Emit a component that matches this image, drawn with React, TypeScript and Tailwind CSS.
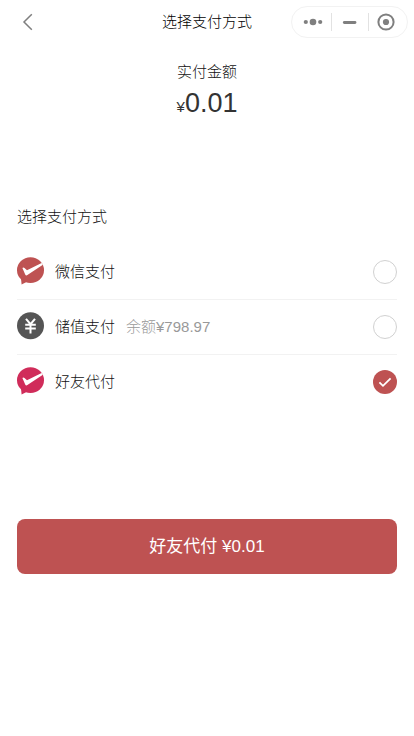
import type { ReactNode } from 'react'

function ChatCheckIcon({ color }: { color: string }) {
  return (
    <svg className="mb-0.5" width="27" height="28" viewBox="0 0 27 28" fill="none">
      <ellipse cx="13.5" cy="13.2" rx="13.5" ry="12.9" fill={color} />
      <path d="M4 21.5L4.6 27.4L9.5 25Z" fill={color} />
      <path d="M5.4 11C6 10.1 6.9 10.4 7.5 11L10 13.2L24.6 5.9L25.9 7.7L10.4 18.1C9.5 18.7 8.6 18.4 8.2 17.5Z" fill="#fff" />
    </svg>
  )
}

function YuanIcon() {
  return (
    <svg className="mb-0.5" width="27" height="28" viewBox="0 0 27 28" fill="none">
      <circle cx="13.5" cy="13.7" r="13.5" fill="#555" />
      <path d="M9 6.8L13.5 12.2L18 6.8M8.2 12.8H18.8M8.2 16.5H18.8M13.5 12V21.5" stroke="#fff" strokeWidth="2" />
    </svg>
  )
}

function Radio({ checked }: { checked: boolean }) {
  if (!checked) {
    return <span className="ml-auto size-6 rounded-full border border-[#d1d1d1]" />
  }
  return (
    <span className="ml-auto flex size-6 items-center justify-center rounded-full bg-[#be5252]">
      <svg width="24" height="24" viewBox="0 0 24 24" fill="none">
        <path d="M6.4 12.3L10 15.8L17.6 8.4" stroke="#fff" strokeWidth="1.8" />
      </svg>
    </span>
  )
}

type Method = {
  name: string
  icon: ReactNode
  note?: string
  checked: boolean
}

const methods: Method[] = [
  { name: '微信支付', icon: <ChatCheckIcon color="#be5252" />, checked: false },
  { name: '储值支付', icon: <YuanIcon />, note: '余额¥798.97', checked: false },
  { name: '好友代付', icon: <ChatCheckIcon color="#d02c5a" />, checked: true },
]

export default function App() {
  return (
    <div className="min-h-screen bg-white font-['Liberation_Sans','Noto_Sans_CJK_SC',sans-serif] text-[15px] font-light text-[#111]">
      <header className="grid h-11 grid-cols-[1fr_auto_1fr] items-center pr-[6px]">
        <svg className="ml-[22px]" width="12" height="18" viewBox="0 0 12 18" fill="none">
          <path d="M9.8 1.2L2 9L9.8 16.8" stroke="#7f7f7f" strokeWidth="1.5" />
        </svg>
        <h1 className="pl-[6px] leading-5 text-black">选择支付方式</h1>
        <div className="flex h-8 w-[117px] items-center justify-self-end rounded-full border border-[#f2f2f2]">
          <svg width="115" height="30" viewBox="0 0 115 30" fill="#7f7f7f">
            <circle cx="13.8" cy="15" r="2.1" />
            <circle cx="21" cy="15" r="3.3" />
            <circle cx="28.2" cy="15" r="2.1" />
            <path d="M39.5 6V24M76.5 6V24" stroke="#e2e2e2" />
            <path d="M52.3 15.5H63" stroke="#7f7f7f" strokeWidth="2.8" strokeLinecap="round" />
            <circle cx="94" cy="15" r="7.6" fill="none" stroke="#7f7f7f" strokeWidth="2" />
            <circle cx="94" cy="15" r="3.1" />
          </svg>
        </div>
      </header>

      <section className="flex h-[152px] flex-col items-center pt-[18px]">
        <p className="leading-5">实付金额</p>
        <p className="mt-[5px] leading-8 text-[#333]">
          ¥<span className="text-[27px]">0.01</span>
        </p>
      </section>

      <section className="px-[17px]">
        <h2 className="pt-[11px] leading-5">选择支付方式</h2>
        <ul className="mt-[18px]">
          {methods.map((method) => (
            <li key={method.name} className="flex h-[55px] items-center border-b border-[#f2f2f2] last:border-transparent">
              {method.icon}
              <span className="ml-[11px] leading-5">{method.name}</span>
              {method.note && <span className="ml-[11px] leading-5 text-[#999]">{method.note}</span>}
              <Radio checked={method.checked} />
            </li>
          ))}
        </ul>
        <button className="mt-[109px] h-[55px] w-full rounded-lg bg-[#be5252] text-[17px] font-normal text-white">
          好友代付 ¥0.01
        </button>
      </section>
    </div>
  )
}
